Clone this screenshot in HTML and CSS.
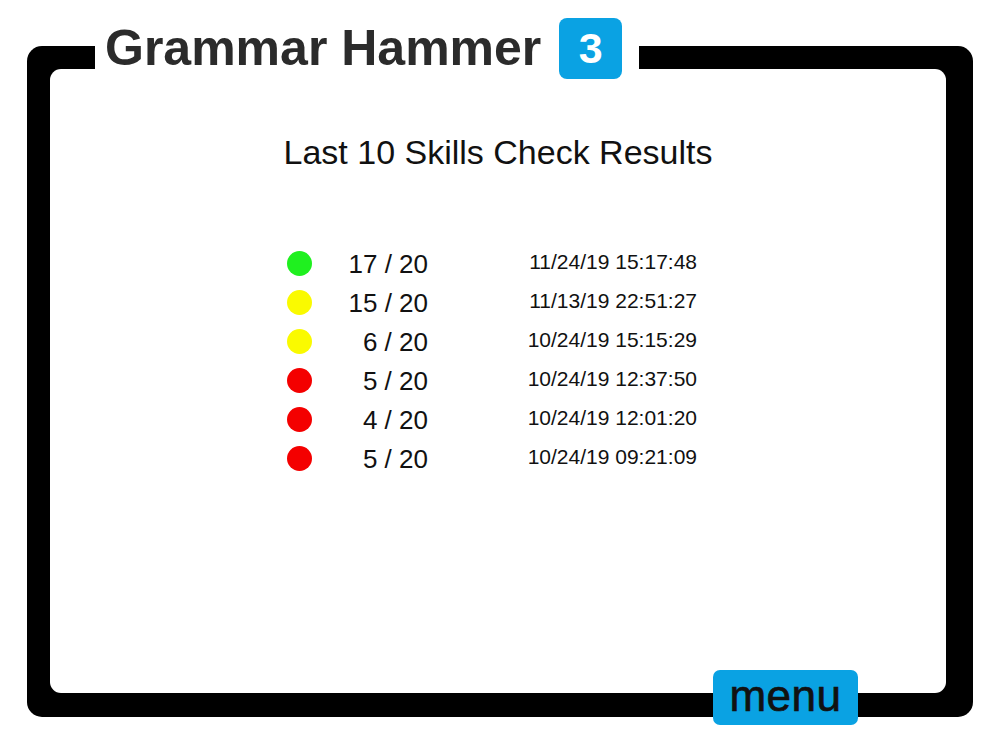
FILE: index.html
```html
<!DOCTYPE html>
<html>
<head>
<meta charset="utf-8">
<title>Grammar Hammer 3</title>
<link rel="stylesheet" href="styles.css">
</head>
<body>
<div class="frame">
  <div class="title">
    <span class="title-text">Grammar Hammer</span>
    <span class="badge">3</span>
  </div>
  <div class="inner">
    <h1 class="heading">Last 10 Skills Check Results</h1>
    <div class="results">
      <div class="row"><span class="dot green"></span><span class="score">17 / 20</span><span class="date">11/24/19 15:17:48</span></div>
      <div class="row"><span class="dot yellow"></span><span class="score">15 / 20</span><span class="date">11/13/19 22:51:27</span></div>
      <div class="row"><span class="dot yellow"></span><span class="score">6 / 20</span><span class="date">10/24/19 15:15:29</span></div>
      <div class="row"><span class="dot red"></span><span class="score">5 / 20</span><span class="date">10/24/19 12:37:50</span></div>
      <div class="row"><span class="dot red"></span><span class="score">4 / 20</span><span class="date">10/24/19 12:01:20</span></div>
      <div class="row"><span class="dot red"></span><span class="score">5 / 20</span><span class="date">10/24/19 09:21:09</span></div>
    </div>
  </div>
  <div class="menu">menu</div>
</div>
</body>
</html>
```

FILE: styles.css
```css
html, body {
  margin: 0;
  padding: 0;
  background: #ffffff;
  font-family: "Liberation Sans", Arial, sans-serif;
}

body {
  min-height: 750px;
  padding-top: 46px;
  box-sizing: border-box;
}

.frame {
  position: relative;
  box-sizing: border-box;
  width: 946px;
  height: 671px;
  margin: 0 0 0 27px;
  padding: 23px 27px 24px 23px;
  background: #000000;
  border-radius: 15px;
}

.inner {
  box-sizing: border-box;
  height: 100%;
  background: #ffffff;
  border-radius: 11px;
  padding-top: 63px;
}

.title {
  position: absolute;
  left: 68px;
  top: -28px;
  width: 544px;
  height: 61px;
  box-sizing: border-box;
  padding-left: 10px;
  display: flex;
  align-items: center;
  background: #ffffff;
}

.title-text {
  font-size: 50px;
  font-weight: bold;
  color: #2b2b2b;
  line-height: 61px;
  white-space: nowrap;
}

.badge {
  margin-left: 18px;
  width: 63px;
  height: 61px;
  border-radius: 8px;
  background: #0aa2e3;
  color: #ffffff;
  font-size: 43px;
  font-weight: bold;
  line-height: 61px;
  text-align: center;
}

.heading {
  margin: 0;
  font-size: 34px;
  font-weight: normal;
  line-height: 40px;
  color: #111111;
  text-align: center;
}

.results {
  margin-top: 72px;
  padding-left: 237px;
  display: flex;
  flex-direction: column;
}

.row {
  display: grid;
  grid-template-columns: 25px 116px 269px;
  align-items: center;
  height: 39px;
  color: #111111;
}

.dot {
  width: 25px;
  height: 25px;
  border-radius: 50%;
}

.green { background: #1ff01f; }
.yellow { background: #fafa00; }
.red { background: #f40000; }

.score {
  font-size: 26px;
  line-height: 30px;
  text-align: right;
}

.date {
  font-size: 21px;
  line-height: 24px;
  text-align: right;
  padding-bottom: 4px;
}

.menu {
  position: absolute;
  left: 686px;
  top: 624px;
  width: 145px;
  height: 55px;
  border-radius: 7px;
  background: #0aa2e3;
  color: #111111;
  font-size: 44px;
  line-height: 52px;
  text-align: center;
  -webkit-text-stroke: 0.7px #111111;
  letter-spacing: 0.5px;
}
```
